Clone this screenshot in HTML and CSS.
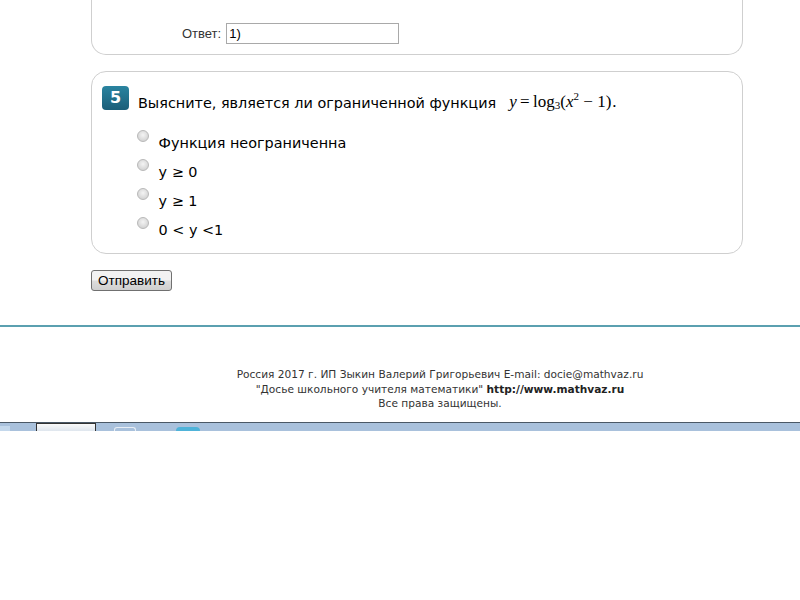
FILE: index.html
```html
<!DOCTYPE html>
<html lang="ru">
<head>
    <meta charset="UTF-8">
    <title>Досье школьного учителя математики</title>
    <link rel="stylesheet" href="styles.css">
</head>
<body>
    <div class="page">
        <div class="task task-prev">
            <div class="answer-row">
                <label for="answer4">Ответ:</label>
                <input type="text" id="answer4" value="1)">
            </div>
        </div>

        <div class="task">
            <div class="question">
                <span class="num">5</span>
                <span class="q-text">Выясните, является ли ограниченной функция</span>
                <span class="formula"><i>y</i>&thinsp;=&thinsp;log<sub>3</sub>(<i>x</i><sup>2</sup> &minus; 1)</span><span class="dot">.</span>
            </div>
            <ul class="options">
                <li><label><input type="radio" name="q5"> Функция неограниченна</label></li>
                <li><label><input type="radio" name="q5"> y &ge; 0</label></li>
                <li><label><input type="radio" name="q5"> y &ge; 1</label></li>
                <li><label><input type="radio" name="q5"> 0 &lt; y &lt;1</label></li>
            </ul>
        </div>

        <button type="submit" class="send">Отправить</button>
    </div>

    <div class="footer">
        <p>Россия 2017 г. ИП Зыкин Валерий Григорьевич E-mail: docie@mathvaz.ru</p>
        <p>"Досье школьного учителя математики" <b>http://www.mathvaz.ru</b></p>
        <p>Все права защищены.</p>
    </div>

    <div class="taskbar">
        <span class="tb-start"></span>
        <span class="tb-tab"></span>
        <span class="tb-icon"></span>
        <span class="tb-round"></span>
    </div>
</body>
</html>
```

FILE: styles.css
```css
body {
    margin: 0;
    padding: 0;
    background: #fff;
    font-family: "DejaVu Sans", Verdana, sans-serif;
    color: #000;
}

.page {
    width: 652px;
    margin-left: 91px;
}

.task {
    box-sizing: border-box;
    border: 1px solid #cfcfcf;
    border-radius: 15px;
    margin-bottom: 16px;
}

.task-prev {
    height: 55px;
    border-top: 0;
    border-radius: 0 0 15px 15px;
    padding-top: 23px;
}

.answer-row {
    display: flex;
    align-items: center;
    padding-left: 90px;
    font-family: "Liberation Sans", Arial, sans-serif;
    font-size: 13px;
    color: #333;
}

.answer-row label {
    margin-right: 5px;
}

.answer-row input {
    box-sizing: border-box;
    width: 173px;
    height: 21px;
    border: 1px solid #a9a9a9;
    padding: 0 2px;
    font-family: "Liberation Sans", Arial, sans-serif;
    font-size: 13px;
    color: #000;
}

.task + .task {
    height: 183px;
    padding: 14px 0 0 10px;
}

.question {
    display: flex;
    align-items: flex-end;
    font-size: 14.4px;
    height: 26px;
}

.num {
    display: inline-block;
    width: 27px;
    height: 24px;
    line-height: 24px;
    text-align: center;
    border-radius: 4px;
    background: linear-gradient(#2a84a0, #1b5e78);
    color: #fff;
    font-weight: bold;
    font-size: 16px;
    margin-right: 9px;
    align-self: flex-start;
}

.q-text {
    margin-bottom: 1px;
}

.formula {
    font-family: "Liberation Serif", "Times New Roman", serif;
    font-size: 17px;
    margin-left: 13px;
}

.formula sub {
    font-size: 11px;
    vertical-align: -2px;
    line-height: 0;
}

.formula sup {
    font-size: 11px;
    vertical-align: 7px;
    line-height: 0;
}

.dot {
    font-size: 17px;
    margin-left: 1px;
    font-family: "Liberation Serif", serif;
}

.options {
    list-style: none;
    margin: 18px 0 0 0;
    padding: 0 0 0 35px;
    font-size: 14.4px;
}

.options li {
    height: 29px;
}

.options input {
    appearance: none;
    -webkit-appearance: none;
    box-sizing: border-box;
    width: 12px;
    height: 12px;
    border: 1px solid #b8b8b8;
    border-radius: 50%;
    background: radial-gradient(circle at 50% 40%, #f4f4f4, #d6d6d6 70%);
    margin: 0 5px 0 0;
    vertical-align: 6px;
}

.send {
    font-family: "Liberation Sans", Arial, sans-serif;
    font-size: 13.5px;
    height: 21px;
    padding: 0 6px;
    border: 1px solid #707070;
    border-radius: 3px;
    background: linear-gradient(#f2f2f2 45%, #dcdcdc 55%, #cfcfcf);
    color: #000;
}

.footer {
    margin-top: 34px;
    border-top: 2px solid #5ba0b0;
    padding: 40px 0 11px 80px;
    text-align: center;
    font-size: 10.6px;
    color: #333;
}

.footer p {
    margin: 0;
    line-height: 14.5px;
}

.footer b {
    color: #222;
}

.taskbar {
    display: flex;
    align-items: flex-end;
    height: 8px;
    border-top: 1px solid #4a5866;
    background: #a9c1dc;
    overflow: hidden;
}

.tb-start {
    width: 10px;
    height: 5px;
    background: #c4d8ec;
    margin-right: 26px;
}

.tb-tab {
    box-sizing: border-box;
    width: 60px;
    height: 8px;
    border: 1px solid #333;
    border-bottom: 0;
    background: linear-gradient(#fafafa, #dfe6ee);
    margin-right: 18px;
}

.tb-icon {
    box-sizing: border-box;
    width: 22px;
    height: 4px;
    border: 1px solid #e8eef5;
    border-bottom: 0;
    border-radius: 3px 3px 0 0;
    margin-right: 40px;
}

.tb-round {
    width: 24px;
    height: 4px;
    border-radius: 12px 12px 0 0;
    background: #4fb3d9;
}
```
